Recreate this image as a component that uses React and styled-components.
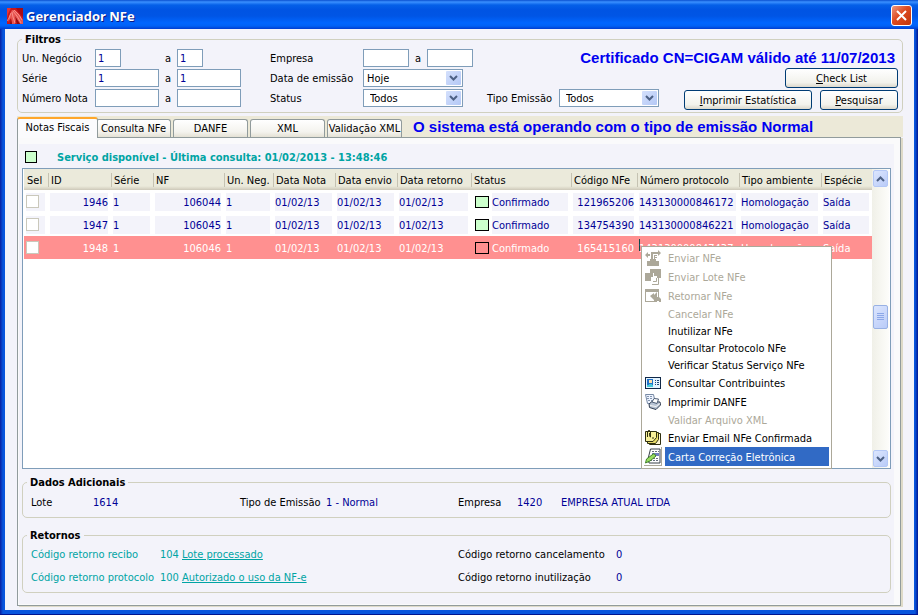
import React from "react";
import styled, { createGlobalStyle, css } from "styled-components";

const GlobalStyle = createGlobalStyle`
  * {
    box-sizing: border-box;
  }
  body {
    margin: 0;
    font-family: "DejaVu Sans Condensed", "DejaVu Sans", sans-serif;
    font-size: 11px;
    line-height: 14px;
    color: #000;
  }
  input, select, button, table {
    font: inherit;
    color: inherit;
  }
`;

const Window = styled.div`
  min-height: 100vh;
  display: flex;
  flex-direction: column;
  padding: 0 4px 4px 5px;
  background: linear-gradient(90deg, #0a1fa0, #0855dd 3px, #0855dd calc(100% - 3px), #001590);
  border-bottom: 1px solid #001590;
`;

const TitleBar = styled.header`
  height: 29px;
  margin: 0 -4px 0 -5px;
  padding: 2px 6px 0 7px;
  display: flex;
  align-items: center;
  gap: 3px;
  background: linear-gradient(#0a50d0, #3a90ff 2px, #0560e8 5px, #0054e3 10px, #0055e5 16px, #0066ff 23px, #0061f5 26px, #003dd0);
`;

const Title = styled.h1`
  flex: 1;
  margin: 0;
  font-family: "Open Sans", sans-serif;
  font-size: 13px;
  font-weight: 700;
  color: #fff;
  text-shadow: 1px 1px 0 #0a1883;
`;

const CloseButton = styled.button`
  width: 21px;
  height: 21px;
  padding: 0;
  display: flex;
  align-items: center;
  justify-content: center;
  border: 1px solid #fff;
  border-radius: 3px;
  background: linear-gradient(135deg, #ee9880, #dd4a20 45%, #c0350c);
`;

const Client = styled.main`
  flex: 1;
  display: flex;
  flex-direction: column;
  padding: 3px 11px 4px 12px;
  background: #f3f3fa;
`;

const Group = styled.fieldset`
  margin: 0;
  min-width: 0;
  border: 1px solid #d0d0bf;
  border-radius: 5px;
  padding: ${({ $pad }) => $pad};
`;

const Legend = styled.legend`
  height: 14px;
  line-height: 16px;
  padding: 0 3px;
  font-weight: 700;
`;

const FilterRow = styled.div`
  display: flex;
  align-items: center;
  height: 20px;
`;

const Label = styled.label`
  width: ${({ $w }) => $w}px;
  padding-top: 1px;
  flex-shrink: 0;
  white-space: nowrap;
`;

const Slot = styled.div`
  width: ${({ $w }) => $w}px;
  display: flex;
`;

const To = styled.span`
  width: 18px;
  padding: 1px 0 0 6px;
`;

const TextInput = styled.input`
  width: ${({ $w }) => $w}px;
  height: 18px;
  padding: 0 2px;
  border: 1px solid #7f9db9;
  background: #fff;
  color: #000096;
  outline: none;
`;

const SelectBox = styled.div`
  width: 100px;
  height: 18px;
  display: flex;
  align-items: center;
  padding-right: 1px;
  border: 1px solid #7f9db9;
  background: #fff;

  select {
    flex: 1;
    min-width: 0;
    height: 16px;
    padding: 2px 0 0 ${({ $indent }) => $indent}px;
    border: 0;
    background: transparent;
    appearance: none;
    outline: none;
  }
`;

const Arrow = styled.span`
  width: 15px;
  height: 14px;
  display: flex;
  align-items: center;
  justify-content: center;
  background: linear-gradient(135deg, #d4e0fc, #b4c8f6);
  border-radius: 1px;
`;

const Notice = styled.strong`
  font-family: "Liberation Sans", sans-serif;
  font-size: 15px;
  line-height: 20px;
  color: #0000f0;
  white-space: nowrap;
  margin-left: ${({ $left }) => $left};
  margin-right: 3px;
`;

const Actions = styled.div`
  display: flex;
  gap: 8px;
  margin-left: auto;
  padding-top: ${({ $top }) => $top || 0}px;
`;

const PushButton = styled.button`
  width: ${({ $w }) => $w}px;
  height: 20px;
  padding: 1px 0 0;
  border: 1px solid #003c74;
  border-radius: 3px;
  background: linear-gradient(#fff, #f2f2ec 75%, #dcd8cc);
  white-space: nowrap;
`;

const TabStrip = styled.div`
  display: flex;
  align-items: flex-end;
  height: 21px;
  margin-top: 3px;
  background: #ece9d8;
`;

const Tab = styled.button`
  width: 75px;
  height: 18px;
  margin-right: 2px;
  padding: 1px 0 0;
  border: 1px solid #919b9c;
  border-bottom: 0;
  border-radius: 3px 3px 0 0;
  background: linear-gradient(#fff, #f4f3ee 70%, #e4e1d4);
  white-space: nowrap;
  ${({ $active }) =>
    $active &&
    css`
      position: relative;
      width: 81px;
      height: 21px;
      margin: 0 -2px -1px 0;
      padding-bottom: 2px;
      border-top: 2px solid #ffa62b;
      background: #fbfbfd;
    `}
`;

const Panel = styled.section`
  flex: 1;
  display: flex;
  flex-direction: column;
  margin-right: 2px;
  padding: 6px 6px 1px 1px;
  border: 1px solid #919b9c;
  background: #fafafb;
  box-shadow: 2px 1px 0 #dedac8;
`;

const PanelBody = styled.div`
  flex: 1;
  display: flex;
  flex-direction: column;
  padding: 0 3px 11px;
  background: #f3f3fa;
`;

const ServiceBar = styled.div`
  height: 24px;
  padding: 2px 0 0 3px;
  display: flex;
  align-items: center;
  gap: 20px;
  line-height: 18px;
  font-weight: 700;
  color: #00a4a4;
`;

const ServiceText = styled.span`
  padding-top: 2px;
`;

const Swatch = styled.span`
  display: inline-block;
  flex-shrink: 0;
  width: ${({ $w }) => $w}px;
  height: 12px;
  border: 1px solid #000;
  background: ${({ $color }) => $color || "#ccffcc"};
`;

const ListFrame = styled.div`
  position: relative;
  flex: 1;
  display: flex;
  align-items: stretch;
  border: 1px solid #7f9db9;
  background: #fff;
  padding: 0 1px;
`;

const ListArea = styled.div`
  flex: 1;
  min-width: 0;
`;

const Table = styled.table`
  width: 100%;
  table-layout: fixed;
  border-collapse: separate;
  border-spacing: 0;

  th {
    height: 21px;
    padding: 0;
    text-align: left;
    font-weight: 400;
    white-space: nowrap;
    background: linear-gradient(#ebeadb 17px, #d6d2c2 20px, #cbc7b8);
  }
  td {
    height: 23px;
    padding: 0 3px 0 2px;
  }
`;

const HeadText = styled.span`
  display: block;
  height: 14px;
  line-height: 16px;
  padding-left: 2px;
  border-left: 1px solid ${({ $first }) => ($first ? "transparent" : "#c5c2b2")};
`;

const Row = styled.tr`
  color: ${({ $selected }) => ($selected ? "#fff" : "#000096")};
  background: ${({ $selected }) => ($selected ? "#ff9090" : "#fff")};
`;

const Chip = styled.div`
  height: 18px;
  line-height: 20px;
  white-space: nowrap;
  text-align: ${({ $right }) => ($right ? "right" : "left")};
  background: ${({ $selected }) => ($selected ? "transparent" : "#f3f3fa")};
`;

const Caret = styled.span`
  display: block;
  width: 1px;
  height: 12px;
  margin-right: -1px;
  background: #104848;
`;

const StatusCell = styled.div`
  display: flex;
  align-items: center;
  gap: 3px;
  padding-left: 2px;

  ${Chip} {
    flex: 1;
  }
`;

const Check = styled.input`
  display: block;
  appearance: none;
  width: 13px;
  height: 13px;
  margin: 2px 0;
  border: 1px solid #cac8bb;
  background: #fff;
`;

const FlexChip = styled(Chip)`
  display: flex;
  align-items: flex-start;
`;

const ScrollBar = styled.div`
  width: 17px;
  display: flex;
  flex-direction: column;
  padding: 1px 0;
  background: linear-gradient(90deg, #f0f0e8, #fdfdfa);
`;

const ScrollButton = styled.button`
  width: 15px;
  height: 17px;
  margin: 0 1px;
  padding: 0;
  display: flex;
  align-items: center;
  justify-content: center;
  border: 1px solid #b4c8f6;
  border-radius: 2px;
  background: linear-gradient(135deg, #dce6fe, #b9cbf8);
`;

const Space = styled.div`
  flex: ${({ $grow }) => $grow};
`;

const Thumb = styled(ScrollButton)`
  height: 24px;
  border-color: #98b1e4;
`;

const Menu = styled.div`
  position: absolute;
  left: 618px;
  top: 77px;
  width: 191px;
  padding: 1px 2px 2px;
  border: 1px solid #aca899;
  background: #fff;
  color: #000;
`;

const MenuItem = styled.button`
  width: 100%;
  height: ${({ $tall }) => ($tall ? 19 : 17)}px;
  padding: 0;
  display: flex;
  align-items: center;
  gap: 3px;
  border: 0;
  background: transparent;
  text-align: left;
  white-space: nowrap;

  &:disabled {
    color: #aca899;
  }
`;

const MenuIcon = styled.span`
  width: 18px;
  height: 100%;
  display: flex;
  align-items: center;
  justify-content: center;
  ${({ $active }) =>
    $active &&
    css`
      border-right: 1px solid #aca899;
      border-bottom: 1px solid #aca899;
    `}
`;

const MenuText = styled.span`
  flex: 1;
  height: 100%;
  display: flex;
  align-items: center;
  padding: 2px 0 0 3px;
  ${({ $active }) =>
    $active &&
    css`
      background: #316ac5;
      color: #fff;
    `}
`;

const DataRow = styled.div`
  display: grid;
  grid-template-columns: ${({ $cols }) => $cols};
  align-items: center;
  height: ${({ $h }) => $h}px;
  padding: 0 4px;
  white-space: nowrap;
  color: #000096;
`;

const Caption = styled.span`
  color: ${({ $teal }) => ($teal ? "#00a4a4" : "#000")};
`;

const Link = styled.a`
  color: #00a4a4;
  text-decoration: underline;
`;

const Stack = styled.div`
  margin-top: ${({ $top }) => $top}px;
`;

const Chevron = ({ up }) => (
  <svg width="9" height="6" viewBox="0 0 9 6" fill="none" stroke="#4d6185" strokeWidth="2">
    <path d={up ? "M1 5L4.500 1.500L8 5" : "M1 1L4.500 4.500L8 1"} />
  </svg>
);

const Logo = () => (
  <svg width="16" height="16" viewBox="0 0 16 16">
    <rect width="16" height="16" fill="#c8181c" />
    <path d="M0 0H4L1 6L0 10Z" fill="#e83434" />
    <path d="M9 0H16V9L12 5Z" fill="#a80c14" />
    <path d="M5 2L8 2L12 6L16 12V16H13L9 10L8 16H5L4 10L1 14L2 8Z" fill="#e85450" />
    <path d="M6 3L10 8L14 15M7 2L12 7L15 12M5 4L6 9L8 15M4 5L2 10L0 13" stroke="#ffa8a0" strokeWidth=".7" fill="none" />
    <path d="M8 8L10 16H13ZM4 11L3 16H5Z" fill="#900c10" />
  </svg>
);

const icons = {
  send: (
    <g fill="#aca899">
      <path d="M0 5L3 2V4H5V6H3V8ZM16 3L13 0V2H7V4H13V6Z" />
      <path d="M6 2H8V9H6ZM9 5H12V6H10V7H12V8H10V9H9Z" />
      <path d="M2 11H5V9H11V11H14V16H2Z" />
    </g>
  ),
  batch: (
    <g fill="#aca899">
      <path d="M5 0H16V9H12V7H9V4H5ZM0 4H8V8H6V12H0Z" />
      <path d="M7 15.500H13.500V9M8 12.500H11.500V9" fill="none" stroke="#aca899" />
    </g>
  ),
  back: (
    <path fill="#aca899" fillRule="evenodd" d="M0 1H14V9L16 11V14H14V13H12V14H0ZM1 4V13H9V12L5 8L9 5V7L12 4V9H13V4Z" />
  ),
  people: (
    <g>
      <rect x=".5" y="2.500" width="15" height="11" fill="#e4f4ff" stroke="#102848" />
      <rect x="2" y="4" width="6" height="8" fill="#2070c8" />
      <rect x="4" y="5" width="3" height="3" fill="#ffe0a8" />
      <path d="M2 12V10H4V9H7V10H8V12Z" fill="#48c8d8" />
      <path d="M10 5.500H11M12 5.500H14M10 7.500H11M12 7.500H14M10 9.500H11M12 9.500H14" stroke="#204878" />
    </g>
  ),
  printer: (
    <g>
      <path d="M.5.5H8.500L10.500 9.500H2.500Z" fill="#eef4ff" stroke="#788aa4" />
      <path d="M2 2.500H8M2 4.500H8M3 6.500H8" stroke="#8496b0" strokeDasharray="2 1" />
      <path d="M4 10L7 7.500L15 8L15.500 11L11 15.500L4.500 13.500Z" fill="#b8c4d4" stroke="#303c50" />
      <path d="M7 8L9 4.500L13.500 5L12 9.500Z" fill="#fff" stroke="#506078" />
      <path d="M5 11.500L11 12.500L15 9.500" stroke="#f6f6f6" fill="none" />
    </g>
  ),
  mail: (
    <g stroke="#303010">
      <path d="M4.500 3.500H15.500V14.500H4.500Z" fill="#fff8d0" />
      <path d="M2.500 2.500H13.500V9.500L10.500 13.500H2.500Z" fill="#e8dc68" />
      <path d="M.5 1.500H11.500V7.500L8 11.500H.5Z" fill="#f8f098" />
      <path d="M2.500 7V1.500Q4-1 5.500 1.500V7Q4.500 8 4.500 3M7 8H9" fill="none" />
    </g>
  ),
  letter: (
    <g>
      <path d="M5.500 1H15V15H4L3 11Z" fill="#fff" stroke="#384048" />
      <path d="M7 3.500H14M5 10.500H13M5 12.500H13" stroke="#687080" strokeDasharray="2 1" />
      <rect x="7" y="5" width="7" height="3" fill="#7080c0" />
      <path d="M.5 15L1.500 11L9 5.500L11 8L5 13Z" fill="#98dc60" stroke="#408028" />
    </g>
  ),
};

const Icon = ({ name }) => (
  <svg width="16" height="16" viewBox="0 0 16 16">
    {icons[name]}
  </svg>
);

const columns = [
  ["Sel", 24],
  ["ID", 63],
  ["Série", 42],
  ["NF", 71],
  ["Un. Neg.", 49],
  ["Data Nota", 62],
  ["Data envio", 62],
  ["Data retorno", 74],
  ["Status", 100],
  ["Código NFe", 66],
  ["Número protocolo", 102],
  ["Tipo ambiente", 82],
  ["Espécie", null],
];

const notes = [
  { id: 1946, nf: 106044, code: 121965206, protocol: "143130000846172" },
  { id: 1947, nf: 106045, code: 134754390, protocol: "143130000846221" },
  { id: 1948, nf: 106046, code: 165415160, protocol: "143130000847437", selected: true },
];

const menu = [
  { text: "Enviar NFe", icon: "send", disabled: true },
  { text: "Enviar Lote NFe", icon: "batch", disabled: true },
  { text: "Retornar NFe", icon: "back", disabled: true },
  { text: "Cancelar NFe", disabled: true },
  { text: "Inutilizar NFe" },
  { text: "Consultar Protocolo NFe" },
  { text: "Verificar Status Serviço NFe" },
  { text: "Consultar Contribuintes", icon: "people" },
  { text: "Imprimir DANFE", icon: "printer" },
  { text: "Validar Arquivo XML", disabled: true },
  { text: "Enviar Email NFe Confirmada", icon: "mail" },
  { text: "Carta Correção Eletrônica", icon: "letter", active: true },
];

const Range = ({ id, label, labelWidth, slot, width, value }) => (
  <>
    <Label htmlFor={id} $w={labelWidth}>{label}</Label>
    <Slot $w={slot}>
      <TextInput id={id} $w={width} defaultValue={value} />
    </Slot>
    <To>a</To>
    <Slot $w={slot}>
      <TextInput aria-label={`${label} final`} $w={width} defaultValue={value} />
    </Slot>
  </>
);

const Choice = ({ id, label, labelWidth, value, indent }) => (
  <>
    <Label htmlFor={id} $w={labelWidth}>{label}</Label>
    <SelectBox $indent={indent}>
      <select id={id} defaultValue={value}>
        <option>{value}</option>
      </select>
      <Arrow>
        <Chevron />
      </Arrow>
    </SelectBox>
  </>
);

const Gap = styled.div`
  width: ${({ $w }) => $w}px;
`;

const Filters = () => (
  <Group $pad="2px 4px 4px">
    <Legend>Filtros</Legend>
    <FilterRow>
      <Range id="unit" label="Un. Negócio" labelWidth={73} slot={64} width={26} value="1" />
      <Gap $w={29} />
      <Range id="company" label="Empresa" labelWidth={93} slot={46} width={46} />
      <Notice $left="auto">Certificado CN=CIGAM válido até 11/07/2013</Notice>
    </FilterRow>
    <FilterRow>
      <Range id="series" label="Série" labelWidth={73} slot={64} width={64} value="1" />
      <Gap $w={29} />
      <Choice id="date" label="Data de emissão" labelWidth={93} value="Hoje" indent={3} />
      <Actions>
        <PushButton $w={113}><u>C</u>heck List</PushButton>
      </Actions>
    </FilterRow>
    <FilterRow>
      <Range id="number" label="Número Nota" labelWidth={73} slot={64} width={64} />
      <Gap $w={29} />
      <Choice id="status" label="Status" labelWidth={93} value="Todos" indent={6} />
      <Gap $w={24} />
      <Choice id="type" label="Tipo Emissão" labelWidth={72} value="Todos" indent={6} />
      <Actions $top={4}>
        <PushButton $w={128}><u>I</u>mprimir Estatística</PushButton>
        <PushButton $w={78}><u>P</u>esquisar</PushButton>
      </Actions>
    </FilterRow>
  </Group>
);

const NoteRow = ({ note }) => {
  const s = note.selected;
  return (
    <Row $selected={s}>
      <td>
        <FlexChip $selected={s}>
          <Check type="checkbox" aria-label={`Selecionar ${note.id}`} />
        </FlexChip>
      </td>
      <td><Chip $selected={s} $right>{note.id}</Chip></td>
      <td><Chip $selected={s}>1</Chip></td>
      <td><Chip $selected={s} $right>{note.nf}</Chip></td>
      <td><Chip $selected={s}>1</Chip></td>
      <td><Chip $selected={s}>01/02/13</Chip></td>
      <td><Chip $selected={s}>01/02/13</Chip></td>
      <td><Chip $selected={s}>01/02/13</Chip></td>
      <td>
        <StatusCell>
          <Swatch $w={14} $color={s && "#ff9090"} />
          <Chip $selected={s}>Confirmado</Chip>
        </StatusCell>
      </td>
      <td><Chip $selected={s} $right>{note.code}</Chip></td>
      <td>
        <FlexChip $selected={s}>
          {s && <Caret />}
          {note.protocol}
        </FlexChip>
      </td>
      <td><Chip $selected={s}>Homologação</Chip></td>
      <td><Chip $selected={s}>Saída</Chip></td>
    </Row>
  );
};

const ContextMenu = () => (
  <Menu>
    {menu.map((item) => (
      <MenuItem key={item.text} $tall={!!item.icon} disabled={item.disabled}>
        <MenuIcon $active={item.active}>{item.icon && <Icon name={item.icon} />}</MenuIcon>
        <MenuText $active={item.active}>{item.text}</MenuText>
      </MenuItem>
    ))}
  </Menu>
);

const NoteList = () => (
  <ListFrame>
    <ListArea>
      <Table>
        <colgroup>
          {columns.map(([name, width]) => (
            <col key={name} width={width || undefined} />
          ))}
        </colgroup>
        <thead>
          <tr>
            {columns.map(([name], i) => (
              <th key={name}><HeadText $first={i === 0}>{name}</HeadText></th>
            ))}
          </tr>
        </thead>
        <tbody>
          {notes.map((note) => (
            <NoteRow key={note.id} note={note} />
          ))}
        </tbody>
      </Table>
    </ListArea>
    <ScrollBar>
      <ScrollButton aria-label="Subir"><Chevron up /></ScrollButton>
      <Space $grow={118} />
      <Thumb aria-label="Posição">
        <svg width="7" height="8" viewBox="0 0 7 8" stroke="#8ca8e8">
          <path d="M0 .5H7M0 2.500H7M0 4.500H7M0 6.500H7" />
        </svg>
      </Thumb>
      <Space $grow={121} />
      <ScrollButton aria-label="Descer"><Chevron /></ScrollButton>
    </ScrollBar>
    <ContextMenu />
  </ListFrame>
);

const App = () => {
  return (
    <>
      <GlobalStyle />
      <Window>
        <TitleBar>
          <Logo />
          <Title>Gerenciador NFe</Title>
          <CloseButton aria-label="Fechar">
            <svg width="11" height="11" viewBox="0 0 11 11" stroke="#fff" strokeWidth="2">
              <path d="M1 1L10 10M10 1L1 10" />
            </svg>
          </CloseButton>
        </TitleBar>
        <Client>
          <Filters />
          <TabStrip>
            <Tab $active>Notas Fiscais</Tab>
            <Tab>Consulta NFe</Tab>
            <Tab>DANFE</Tab>
            <Tab>XML</Tab>
            <Tab>Validação XML</Tab>
            <Notice $left="9px">O sistema está operando com o tipo de emissão Normal</Notice>
          </TabStrip>
          <Panel>
            <PanelBody>
              <ServiceBar>
                <Swatch $w={12} />
                <ServiceText>Serviço disponível - Última consulta: 01/02/2013 - 13:48:46</ServiceText>
              </ServiceBar>
              <NoteList />
              <Stack $top={6}>
                <Group $pad="4px 4px 4px">
                  <Legend>Dados Adicionais</Legend>
                  <DataRow $h={20} $cols="62px 147px 86px 132px 59px 44px auto">
                    <Caption>Lote</Caption>
                    <span>1614</span>
                    <Caption>Tipo de Emissão</Caption>
                    <span>1 - Normal</span>
                    <Caption>Empresa</Caption>
                    <span>1420</span>
                    <span>EMPRESA ATUAL LTDA</span>
                  </DataRow>
                </Group>
              </Stack>
              <Stack $top={10}>
                <Group $pad="1px 4px 3px">
                  <Legend>Retornos</Legend>
                  <DataRow $h={23} $cols="129px 22px 276px 158px auto">
                    <Caption $teal>Código retorno recibo</Caption>
                    <Caption $teal>104</Caption>
                    <span><Link href="#lote">Lote processado</Link></span>
                    <Caption>Código retorno cancelamento</Caption>
                    <span>0</span>
                  </DataRow>
                  <DataRow $h={23} $cols="129px 22px 276px 158px auto">
                    <Caption $teal>Código retorno protocolo</Caption>
                    <Caption $teal>100</Caption>
                    <span><Link href="#autorizado">Autorizado o uso da NF-e</Link></span>
                    <Caption>Código retorno inutilização</Caption>
                    <span>0</span>
                  </DataRow>
                </Group>
              </Stack>
            </PanelBody>
          </Panel>
        </Client>
      </Window>
    </>
  );
};

export default App;
